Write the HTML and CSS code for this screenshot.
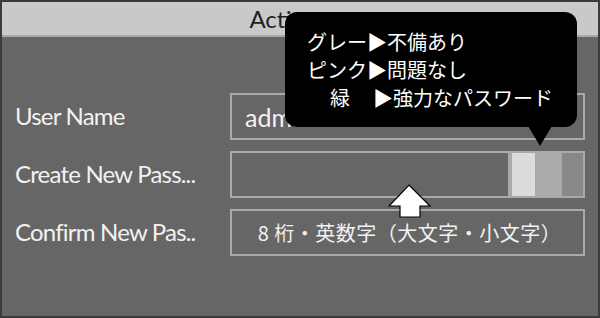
FILE: index.html
```html
<!DOCTYPE html>
<html lang="ja">
<head>
  <meta charset="UTF-8" />
  <title>Action</title>
  <link rel="stylesheet" href="styles.css">
</head>
<body>
  <div class="window">
    <div class="titlebar">Action</div>
    <div class="form">
      <div class="label">User Name</div>
      <div class="field">admin</div>

      <div class="label">Create New Pass...</div>
      <div class="field strength">
        <span class="seg seg-gray"></span>
        <span class="seg seg-mid"></span>
        <span class="seg seg-dark"></span>
      </div>

      <div class="label">Confirm New Pas..</div>
      <div class="field hint">8 桁・英数字（大文字・小文字）</div>
    </div>

    <div class="tooltip">
      <div>グレー▶不備あり</div>
      <div>ピンク▶問題なし</div>
      <div><span class="pad">緑</span>▶強力なパスワード</div>
    </div>

    <svg class="arrow" width="46" height="34" viewBox="0 0 46 34">
      <path d="M21 1 L42 22 L32 22 L32 33 L12 33 L12 22 L1 22 Z" fill="#fff" stroke="#000" stroke-width="1.2"/>
    </svg>
  </div>
</body>
</html>
```

FILE: styles.css
```css
body {
  margin: 0;
  font-family: Lato, "Noto Sans CJK JP", sans-serif;
}
.window {
  position: relative;
  width: 600px;
  height: 318px;
  box-sizing: border-box;
  border: 2px solid #3a3a3a;
  background: #666;
  overflow: hidden;
}
.titlebar {
  height: 33px;
  padding-right: 32px;
  background: #c9c9c9;
  border-bottom: 2px solid #a8a8a8;
  color: #222;
  font-size: 24px;
  line-height: 34px;
  text-align: center;
}
.form {
  display: grid;
  grid-template-columns: 215px 355px;
  grid-auto-rows: 47px;
  row-gap: 11px;
  padding: 56px 0 0 13px;
  color: #f2f2f2;
}
.label {
  display: flex;
  align-items: center;
  padding-bottom: 2px;
  font-size: 24px;
  letter-spacing: -0.8px;
}
.field {
  box-sizing: border-box;
  border: 2px solid #a9a9a9;
  display: flex;
  align-items: center;
  font-size: 25px;
  padding-left: 13px;
}
.strength {
  justify-content: flex-end;
  align-items: stretch;
  padding: 0;
  gap: 2px;
  background-image: linear-gradient(#a9a9a9, #a9a9a9);
  background-size: 75px 100%;
  background-position: right;
  background-repeat: no-repeat;
}
.seg {
  width: 23px;
}
.seg-gray {
  background: #dcdcdc;
}
.seg-mid {
  background: #ababab;
}
.seg-dark {
  width: 21px;
  background: #888;
}
.hint {
  justify-content: center;
  padding: 0 0 0 4px;
  font-size: 20px;
  letter-spacing: 0.5px;
  font-family: "Noto Sans CJK JP", sans-serif;
}
.tooltip {
  position: absolute;
  left: 283px;
  top: 10px;
  width: 292px;
  height: 115px;
  box-sizing: border-box;
  padding: 16px 0 0 22px;
  background: #000;
  border-radius: 12px;
  color: #fff;
  font-family: "Noto Sans CJK JP", sans-serif;
  font-size: 20px;
  line-height: 28px;
}
.tooltip::after {
  content: "";
  position: absolute;
  left: 243px;
  top: 114px;
  border-left: 12px solid transparent;
  border-right: 12px solid transparent;
  border-top: 20px solid #000;
}
.pad {
  display: inline-block;
  width: 66px;
  text-align: center;
}
.arrow {
  position: absolute;
  left: 386px;
  top: 182px;
}
```
